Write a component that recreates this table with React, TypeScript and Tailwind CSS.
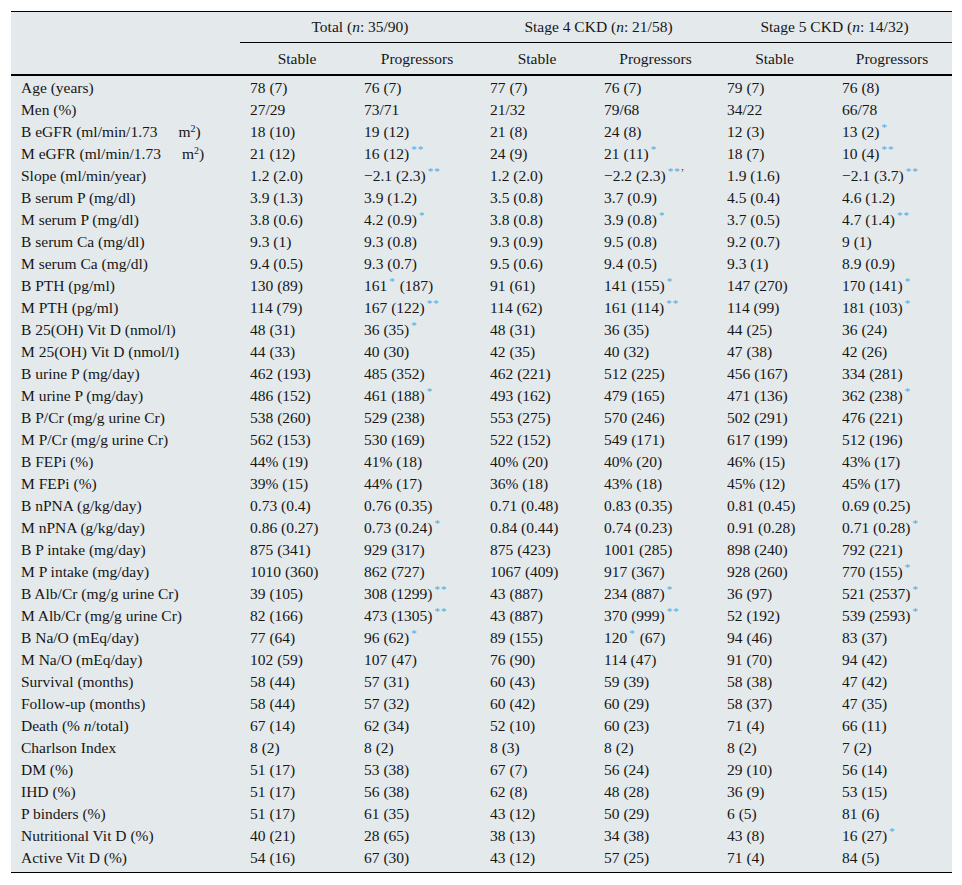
import React from "react";

// {..} marks a blue superscript (significance), [..] a black one
const rows: [React.ReactNode, string[]][] = [
  ["Age (years)", ["78 (7)", "76 (7)", "77 (7)", "76 (7)", "79 (7)", "76 (8)"]],
  ["Men (%)", ["27/29", "73/71", "21/32", "79/68", "34/22", "66/78"]],
  ["eGFR_B", ["18 (10)", "19 (12)", "21 (8)", "24 (8)", "12 (3)", "13 (2){*}"]],
  ["eGFR_M", ["21 (12)", "16 (12){**}", "24 (9)", "21 (11){*}", "18 (7)", "10 (4){**}"]],
  ["Slope (ml/min/year)", ["1.2 (2.0)", "\u22122.1 (2.3){**}", "1.2 (2.0)", "\u22122.2 (2.3){**}[’]", "1.9 (1.6)", "\u22122.1 (3.7){**}"]],
  ["B serum P (mg/dl)", ["3.9 (1.3)", "3.9 (1.2)", "3.5 (0.8)", "3.7 (0.9)", "4.5 (0.4)", "4.6 (1.2)"]],
  ["M serum P (mg/dl)", ["3.8 (0.6)", "4.2 (0.9){*}", "3.8 (0.8)", "3.9 (0.8){*}", "3.7 (0.5)", "4.7 (1.4){**}"]],
  ["B serum Ca (mg/dl)", ["9.3 (1)", "9.3 (0.8)", "9.3 (0.9)", "9.5 (0.8)", "9.2 (0.7)", "9 (1)"]],
  ["M serum Ca (mg/dl)", ["9.4 (0.5)", "9.3 (0.7)", "9.5 (0.6)", "9.4 (0.5)", "9.3 (1)", "8.9 (0.9)"]],
  ["B PTH (pg/ml)", ["130 (89)", "161{*} (187)", "91 (61)", "141 (155){*}", "147 (270)", "170 (141){*}"]],
  ["M PTH (pg/ml)", ["114 (79)", "167 (122){**}", "114 (62)", "161 (114){**}", "114 (99)", "181 (103){*}"]],
  ["B 25(OH) Vit D (nmol/l)", ["48 (31)", "36 (35){*}", "48 (31)", "36 (35)", "44 (25)", "36 (24)"]],
  ["M 25(OH) Vit D (nmol/l)", ["44 (33)", "40 (30)", "42 (35)", "40 (32)", "47 (38)", "42 (26)"]],
  ["B urine P (mg/day)", ["462 (193)", "485 (352)", "462 (221)", "512 (225)", "456 (167)", "334 (281)"]],
  ["M urine P (mg/day)", ["486 (152)", "461 (188){*}", "493 (162)", "479 (165)", "471 (136)", "362 (238){*}"]],
  ["B P/Cr (mg/g urine Cr)", ["538 (260)", "529 (238)", "553 (275)", "570 (246)", "502 (291)", "476 (221)"]],
  ["M P/Cr (mg/g urine Cr)", ["562 (153)", "530 (169)", "522 (152)", "549 (171)", "617 (199)", "512 (196)"]],
  ["B FEPi (%)", ["44% (19)", "41% (18)", "40% (20)", "40% (20)", "46% (15)", "43% (17)"]],
  ["M FEPi (%)", ["39% (15)", "44% (17)", "36% (18)", "43% (18)", "45% (12)", "45% (17)"]],
  ["B nPNA (g/kg/day)", ["0.73 (0.4)", "0.76 (0.35)", "0.71 (0.48)", "0.83 (0.35)", "0.81 (0.45)", "0.69 (0.25)"]],
  ["M nPNA (g/kg/day)", ["0.86 (0.27)", "0.73 (0.24){*}", "0.84 (0.44)", "0.74 (0.23)", "0.91 (0.28)", "0.71 (0.28){*}"]],
  ["B P intake (mg/day)", ["875 (341)", "929 (317)", "875 (423)", "1001 (285)", "898 (240)", "792 (221)"]],
  ["M P intake (mg/day)", ["1010 (360)", "862 (727)", "1067 (409)", "917 (367)", "928 (260)", "770 (155){*}"]],
  ["B Alb/Cr (mg/g urine Cr)", ["39 (105)", "308 (1299){**}", "43 (887)", "234 (887){*}", "36 (97)", "521 (2537){*}"]],
  ["M Alb/Cr (mg/g urine Cr)", ["82 (166)", "473 (1305){**}", "43 (887)", "370 (999){**}", "52 (192)", "539 (2593){*}"]],
  ["B Na/O (mEq/day)", ["77 (64)", "96 (62){*}", "89 (155)", "120{*} (67)", "94 (46)", "83 (37)"]],
  ["M Na/O (mEq/day)", ["102 (59)", "107 (47)", "76 (90)", "114 (47)", "91 (70)", "94 (42)"]],
  ["Survival (months)", ["58 (44)", "57 (31)", "60 (43)", "59 (39)", "58 (38)", "47 (42)"]],
  ["Follow-up (months)", ["58 (44)", "57 (32)", "60 (42)", "60 (29)", "58 (37)", "47 (35)"]],
  ["death", ["67 (14)", "62 (34)", "52 (10)", "60 (23)", "71 (4)", "66 (11)"]],
  ["Charlson Index", ["8 (2)", "8 (2)", "8 (3)", "8 (2)", "8 (2)", "7 (2)"]],
  ["DM (%)", ["51 (17)", "53 (38)", "67 (7)", "56 (24)", "29 (10)", "56 (14)"]],
  ["IHD (%)", ["51 (17)", "56 (38)", "62 (8)", "48 (28)", "36 (9)", "53 (15)"]],
  ["P binders (%)", ["51 (17)", "61 (35)", "43 (12)", "50 (29)", "6 (5)", "81 (6)"]],
  ["Nutritional Vit D (%)", ["40 (21)", "28 (65)", "38 (13)", "34 (38)", "43 (8)", "16 (27){*}"]],
  ["Active Vit D (%)", ["54 (16)", "67 (30)", "43 (12)", "57 (25)", "71 (4)", "84 (5)"]],
];

const Cell = ({ text }: { text: string }) => {
  const parts = text.split(/(\{[^}]*\}|\[[^\]]*\])/);
  return (
    <>
      {parts.map((p, i) => {
        if (p.startsWith("{"))
          return (
            <sup key={i} className="-top-[6px] ml-[2px] text-[11px] text-[#45a9e4] tracking-[1px]">
              {p.slice(1, -1)}
            </sup>
          );
        if (p.startsWith("["))
          return (
            <sup key={i} className="text-[10px]">
              {p.slice(1, -1)}
            </sup>
          );
        return <span key={i}>{p}</span>;
      })}
    </>
  );
};

const Label = ({ name }: { name: React.ReactNode }) => {
  if (name === "eGFR_B" || name === "eGFR_M") {
    return (
      <>
        {name === "eGFR_B" ? "B" : "M"} eGFR (ml/min/1.73
        <span className="ml-[21px]">
          m<sup className="text-[10px]">2</sup>)
        </span>
      </>
    );
  }
  if (name === "death") {
    return (
      <>
        Death (% <i>n</i>/total)
      </>
    );
  }
  return <>{name}</>;
};

const cols = "grid grid-cols-[229px_114px_126px_114px_123px_115px_120px]";

export default function App() {
  return (
    <div className="min-h-screen bg-white pt-[11px] pl-[11px] text-[#161616] font-['Liberation_Serif','Times_New_Roman',serif] text-[15.5px]">
      <div className="w-[941px] border-t border-black bg-[#e4e9ec]">
        {/* header */}
        <div className="flex">
          <div className="w-[229px]" />
          <div className="flex-1">
            <div className="grid h-[30px] grid-cols-[240px_237px_235px] items-center text-center">
              <div>
                Total (<i>n</i>: 35/90)
              </div>
              <div>
                Stage 4 CKD (<i>n</i>: 21/58)
              </div>
              <div>
                Stage 5 CKD (<i>n</i>: 14/32)
              </div>
            </div>
            <div className="h-px bg-black" />
            <div className="grid h-[31px] grid-cols-[114px_126px_114px_123px_115px_120px] items-center text-center">
              <div>Stable</div>
              <div>Progressors</div>
              <div>Stable</div>
              <div>Progressors</div>
              <div>Stable</div>
              <div>Progressors</div>
            </div>
          </div>
        </div>
        <div className="h-[2px] bg-black" />

        {/* body */}
        <div className="pb-[4px]">
          {rows.map(([name, vals], r) => (
            <div key={r} className={`${cols} h-[22px] items-center whitespace-nowrap`}>
              <div className="pl-[10px]">
                <Label name={name} />
              </div>
              {vals.map((v, c) => (
                <div key={c} className="pl-[10px] leading-none">
                  <Cell text={v} />
                </div>
              ))}
            </div>
          ))}
        </div>
        <div className="h-px bg-black" />
      </div>
    </div>
  );
}
